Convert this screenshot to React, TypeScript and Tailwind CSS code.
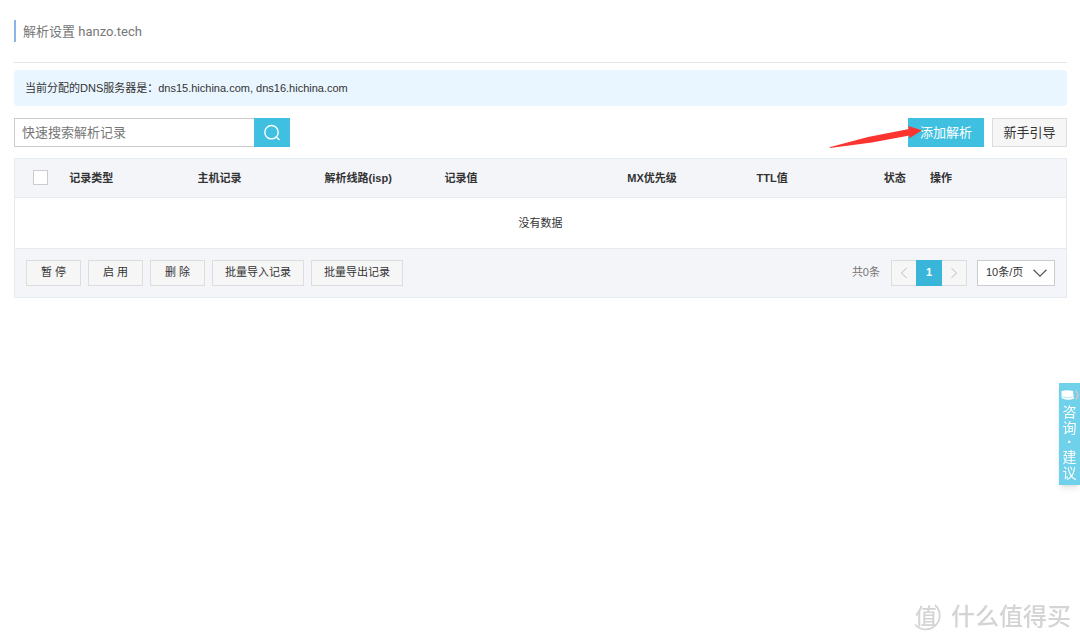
import { useState } from 'react';

const columns = [
  { label: '记录类型', width: 'w-[12.2%]' },
  { label: '主机记录', width: 'w-[12.1%]' },
  { label: '解析线路(isp)', width: 'w-[11.4%]' },
  { label: '记录值', width: 'w-[17.4%]' },
  { label: 'MX优先级', width: 'w-[12.3%]' },
  { label: 'TTL值', width: 'w-[12.1%]' },
  { label: '状态', width: 'w-[4.4%]' },
  { label: '操作', width: '' },
];

const batchActions = ['暂 停', '启 用', '删 除', '批量导入记录', '批量导出记录'];

function SearchIcon() {
  return (
    <svg width="18" height="18" viewBox="0 0 18 18" fill="none" stroke="currentColor" strokeWidth="1.4" aria-hidden="true">
      <circle cx="8.5" cy="8.2" r="6.7" />
      <path d="M13.2 13l2.8 2.6" strokeLinecap="round" />
    </svg>
  );
}

function Chevron({ d, className }: { d: string; className: string }) {
  return (
    <svg viewBox="0 0 12 12" className={className} fill="none" stroke="currentColor" strokeWidth="1" aria-hidden="true">
      <path d={d} />
    </svg>
  );
}

function SearchBar() {
  const [keyword, setKeyword] = useState('');

  return (
    <form className="flex" onSubmit={(e) => e.preventDefault()}>
      <input
        type="text"
        aria-label="快速搜索解析记录"
        placeholder="快速搜索解析记录"
        value={keyword}
        onChange={(e) => setKeyword(e.target.value)}
        className="w-60 h-[29px] px-[7px] border border-r-0 border-[#ccc] bg-white text-[13px] outline-none placeholder:text-[#777]"
      />
      <button type="submit" aria-label="搜索" className="w-9 h-[29px] flex items-center justify-center bg-[#3fc0e0] text-white">
        <SearchIcon />
      </button>
    </form>
  );
}

function RecordTable() {
  return (
    <table className="w-full table-fixed text-[11px]">
      <thead>
        <tr className="h-[38px] bg-[#f4f5f9] border-b border-[#e6ebf0]">
          <th className="w-[4.4%] pl-[18px] text-left">
            <input
              type="checkbox"
              aria-label="全选"
              className="block size-[15px] appearance-none border border-[#ccc] bg-white"
            />
          </th>
          {columns.map((col) => (
            <th key={col.label} className={`pl-2 text-left font-bold whitespace-nowrap ${col.width}`}>
              {col.label}
            </th>
          ))}
        </tr>
      </thead>
      <tbody>
        <tr className="h-[51px]">
          <td colSpan={9} className="text-center">没有数据</td>
        </tr>
      </tbody>
    </table>
  );
}

function Pagination() {
  return (
    <div className="flex items-center text-[11px]">
      <span className="mr-[11px] text-[#777]">共0条</span>
      <nav className="flex h-[26px] border border-[#ddd] bg-[#f6f6f6]">
        <button aria-label="上一页" className="w-6 flex items-center justify-center text-[#bbb]">
          <Chevron d="M8.5 1L3.5 6l5 5" className="size-3" />
        </button>
        <button className="w-[26px] -my-px bg-[#38b5d8] text-white font-bold">1</button>
        <button aria-label="下一页" className="w-6 flex items-center justify-center text-[#bbb]">
          <Chevron d="M3.5 1l5 5-5 5" className="size-3" />
        </button>
      </nav>
      <div className="relative ml-[10px]">
        <select
          aria-label="每页条数"
          className="block w-[78px] h-[26px] pl-2 pb-px appearance-none border border-[#ccc] bg-white text-[11px] outline-none"
        >
          <option>10条/页</option>
          <option>20条/页</option>
          <option>50条/页</option>
        </select>
        <Chevron d="M0.5 3.2L6 8.8l5.5-5.6" className="pointer-events-none absolute right-2 top-[6px] size-[14px] text-[#555]" />
      </div>
    </div>
  );
}

function FeedbackTab() {
  return (
    <a
      href="#feedback"
      className="fixed right-0 top-[383px] w-[21px] h-[102px] pt-[6px] flex flex-col items-center bg-[#70d1ea] text-white text-[14px] leading-4 shadow-md"
    >
      <svg viewBox="0 0 21 12" className="w-full h-3 shrink-0" aria-hidden="true">
        <path d="M2.5 2Q8 0.500 14 2L15 9.500Q9 12 3.500 9.500L2.500 8.500z" fill="#fff" />
        <path d="M3 7.800Q9 9.600 15 7.800" fill="none" stroke="#70d1ea" strokeWidth="0.5" />
        <path d="M16.500 1.500Q21.500 6 16.500 10.500" fill="none" stroke="#c3c6cc" strokeWidth="2" />
      </svg>
      <span className="mt-[3px]">咨</span>
      <span>询</span>
      <span className="leading-[13px] font-bold">·</span>
      <span>建</span>
      <span>议</span>
    </a>
  );
}

function Watermark() {
  return (
    <div className="fixed right-[9px] bottom-2 flex items-center gap-2 text-[#d4d4d4] pointer-events-none">
      <span className="relative size-8 flex items-center text-[22px] leading-none font-medium">
        <svg viewBox="0 0 32 32" className="absolute inset-0" fill="none" stroke="currentColor" aria-hidden="true">
          <path d="M24 4A14 14 0 1 1 4 23.500" strokeWidth="1.8" />
        </svg>
        <span className="pl-1">值</span>
      </span>
      <span className="text-[24px] leading-8 font-medium">什么值得买</span>
    </div>
  );
}

export default function App() {
  return (
    <div className="min-h-screen bg-white pl-[14px] pr-[13px] pt-5 text-[#333] font-['Liberation_Sans','Noto_Sans_CJK_SC',sans-serif]">
      <header className="h-[43px] border-b border-[#e4e4e4]">
        <h1 className="h-[22px] pl-[7px] border-l-2 border-[#8ab4e3] text-[13px] leading-6 text-[#777] font-[Roboto,'Noto_Sans_CJK_SC',sans-serif]">
          解析设置 hanzo.tech
        </h1>
      </header>

      <p className="mt-[7px] px-[11px] rounded-sm bg-[#eaf6ff] text-[11px] leading-9">
        当前分配的DNS服务器是：dns15.hichina.com, dns16.hichina.com
      </p>

      <div className="mt-3 flex justify-between">
        <SearchBar />
        <div className="flex gap-2">
          <div className="relative">
            <button className="w-[76px] h-[29px] bg-[#3fc0e0] text-[13px] text-white">添加解析</button>
            {/* Pointer to the add button */}
            <svg width="96" height="24" viewBox="0 0 96 24" className="absolute right-[60px] top-2 pointer-events-none" aria-hidden="true">
              <path d="M1.5 21.3L40 11 81 3 80 0 94 4.300 81.500 12.300V9.500L44 16.500 2 22z" fill="#fb3430" />
            </svg>
          </div>
          <button className="w-[75px] h-[29px] border border-[#ddd] bg-[#f6f6f6] text-[13px]">新手引导</button>
        </div>
      </div>

      <main className="mt-[11px] border border-[#e6ebf0]">
        <RecordTable />
        <div className="h-[49px] px-[11px] pb-px flex items-center justify-between border-t border-[#e6ebf0] bg-[#f4f5f9]">
          <div className="flex gap-[7px]">
            {batchActions.map((label) => (
              <button
                key={label}
                className="min-w-[55px] h-[26px] px-3 border border-[#ddd] bg-[#f6f6f6] text-[11px] whitespace-nowrap"
              >
                {label}
              </button>
            ))}
          </div>
          <Pagination />
        </div>
      </main>

      <FeedbackTab />
      <Watermark />
    </div>
  );
}
